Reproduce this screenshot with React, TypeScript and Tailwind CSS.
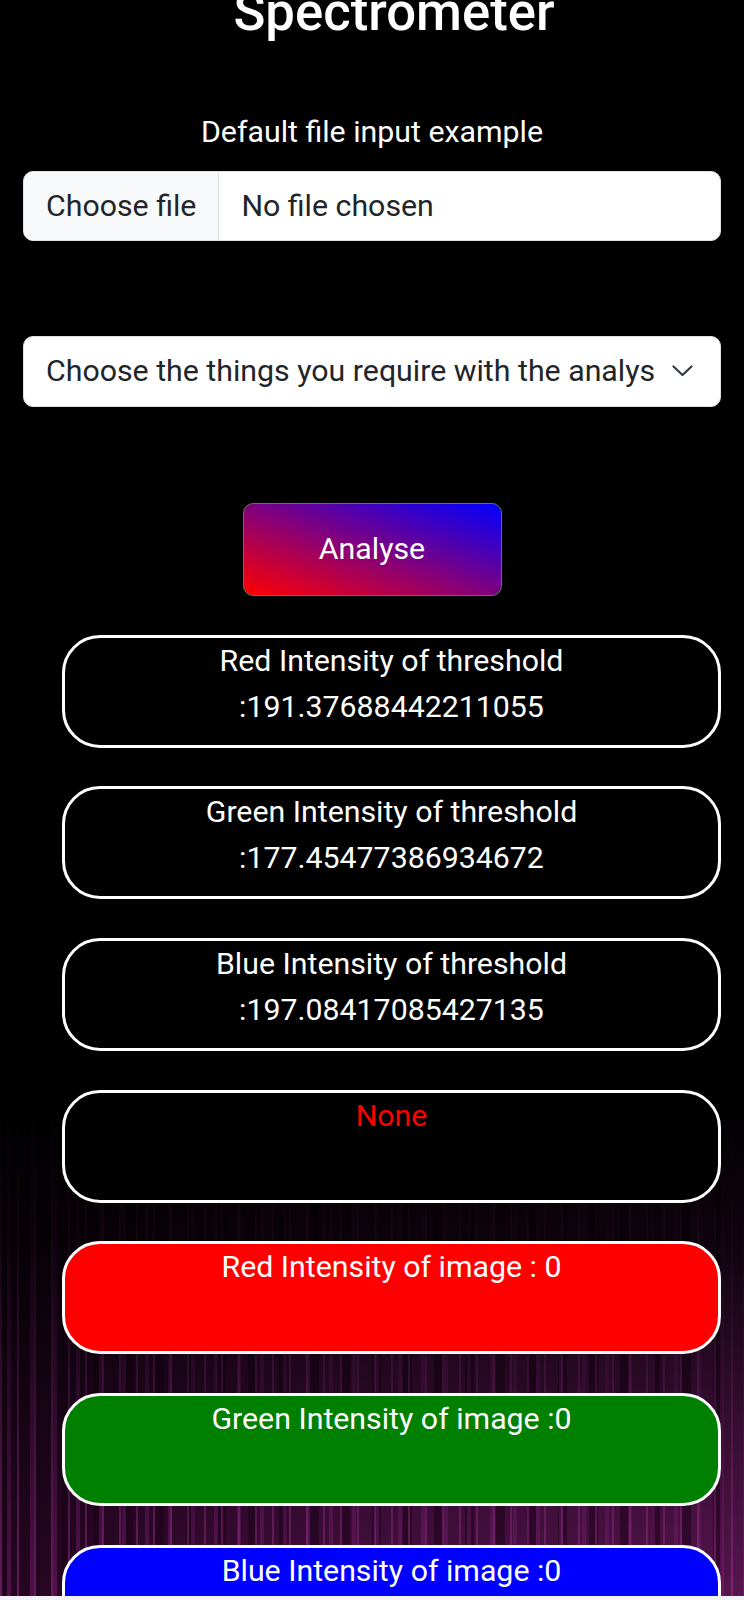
type Result = {
  lines: string[];
  tone: "outline" | "red" | "green" | "blue";
  textClass?: string;
};

const results: Result[] = [
  { lines: ["Red Intensity of threshold", ":191.37688442211055"], tone: "outline" },
  { lines: ["Green Intensity of threshold", ":177.45477386934672"], tone: "outline" },
  { lines: ["Blue Intensity of threshold", ":197.08417085427135"], tone: "outline" },
  { lines: ["None"], tone: "outline", textClass: "text-[#ff0000]" },
  { lines: ["Red Intensity of image : 0"], tone: "red" },
  { lines: ["Green Intensity of image :0"], tone: "green" },
  { lines: ["Blue Intensity of image :0"], tone: "blue" },
];

const toneClass = {
  outline: "bg-black",
  red: "bg-[#ff0000]",
  green: "bg-[#008000]",
  blue: "bg-[#0000ff]",
};

function ResultCard({ item }: { item: Result }) {
  return (
    <div
      className={`ml-[62px] mr-[23px] mb-[38.7px] h-[113px] shrink-0 rounded-[38px] border-[3px] border-white text-center text-[30.3px] leading-[46px] ${toneClass[item.tone]} ${item.textClass ?? "text-white"}`}
    >
      {item.lines.map(line => (
        <div key={line}>{line}</div>
      ))}
    </div>
  );
}

export default function App() {
  return (
    <div className="flex h-[1600px] flex-col font-['Roboto','Liberation_Sans',sans-serif]">
      <div className="flex h-[1596px] flex-col overflow-hidden bg-black bg-[image:linear-gradient(to_bottom,#000_0%,#000_69%,rgba(0,0,0,0.85)_78%,rgba(0,0,0,0.5)_89%,rgba(0,0,0,0.18)_100%),repeating-linear-gradient(90deg,rgba(200,60,180,0.5)_0px,rgba(200,60,180,0.5)_2px,transparent_2px,transparent_17px),repeating-linear-gradient(90deg,transparent_0px,transparent_7px,rgba(160,40,150,0.45)_7px,rgba(160,40,150,0.45)_11px,transparent_11px,transparent_23px),repeating-linear-gradient(90deg,rgba(40,0,35,0.55)_0px,rgba(40,0,35,0.55)_9px,transparent_9px,transparent_31px),linear-gradient(90deg,#2a0626,#55124e_45%,#6a1a60)]">
        {/* Header */}
        <h1 className="-mt-[18px] pl-[44px] text-center text-[52.7px] font-medium leading-[60px] text-white">
          Spectrometer
        </h1>

        <label className="mt-[68px] text-center text-[30.3px] leading-[43.5px] text-white">
          Default file input example
        </label>

        {/* File input */}
        <div className="mx-[23px] mt-[17px] flex h-[70px] shrink-0 overflow-hidden rounded-[10px] border-[1.8px] border-[#dee2e6] bg-white text-[30.3px] text-[#212529]">
          <div className="flex items-center border-r-[1.8px] border-[#dee2e6] bg-[#f8f9fa] px-[22px]">
            Choose file
          </div>
          <div className="flex items-center pl-[22px]">No file chosen</div>
        </div>

        {/* Select */}
        <div className="relative mx-[23px] mt-[95px] flex h-[71px] shrink-0 items-center rounded-[10px] border-[1.8px] border-[#dee2e6] bg-white pl-[22px] pr-[65px] text-[30.3px] text-[#212529]">
          <span className="block overflow-hidden whitespace-nowrap">
            Choose the things you require with the analysis
          </span>
          <svg
            width="21"
            height="12"
            viewBox="0 0 21 12"
            fill="none"
            stroke="#343a40"
            strokeWidth="2.2"
            strokeLinecap="round"
            strokeLinejoin="round"
            className="absolute right-[27px] top-1/2 -translate-y-1/2"
          >
            <polyline points="1.5,1.5 10.5,10 19.5,1.5" />
          </svg>
        </div>

        {/* Analyse button */}
        <button className="mx-auto mt-[96px] flex h-[93px] w-[259px] shrink-0 items-center justify-center rounded-[10px] border-[1.5px] border-[#4f7f4f] bg-[image:linear-gradient(to_top_right,#ff0000,#0000ff)] text-[30.3px] text-white">
          Analyse
        </button>

        <div className="mt-[39px] flex flex-col">
          {results.map(item => (
            <ResultCard key={item.lines[0]} item={item} />
          ))}
        </div>
      </div>
      <div className="h-[4px] bg-[#f4f2f9]" />
    </div>
  );
}
